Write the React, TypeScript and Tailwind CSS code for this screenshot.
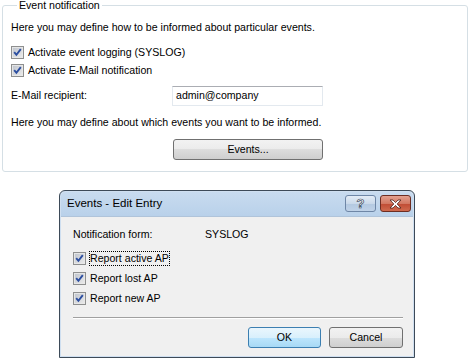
const font = { fontFamily: '"Liberation Sans", Arial, sans-serif' };

function Check({ focus, label }: { focus?: boolean; label: string }) {
  return (
    <label className="flex h-[13px] items-center gap-[4px]">
      <svg width="13" height="13" viewBox="0 0 13 13" className="shrink-0">
        <defs>
          <linearGradient id="cbg" x1="0" y1="0" x2="1" y2="1">
            <stop offset="0" stopColor="#bfc4cd" />
            <stop offset="1" stopColor="#ebebeb" />
          </linearGradient>
        </defs>
        <rect x="0.5" y="0.5" width="12" height="12" fill="#f4f4f4" stroke="#8e8f8f" />
        <rect x="1.5" y="1.5" width="10" height="10" fill="url(#cbg)" stroke="#e6e6e6" strokeWidth="0.8" />
        <path d="M3.2 6.2 L5.4 8.8 L9.8 3.2" fill="none" stroke="#2c4ea0" strokeWidth="1.9" />
      </svg>
      <span className={focus ? 'outline outline-1 outline-dotted outline-black leading-[13px]' : 'leading-[13px]'}>{label}</span>
    </label>
  );
}

function Btn({ children, w, focus }: { children: React.ReactNode; w: string; focus?: boolean }) {
  return (
    <button
      className={`${w} h-[21px] rounded-[3px] border text-[10.6px] leading-[19px] text-black ${
        focus
          ? 'border-[#3c7fb1] bg-[linear-gradient(#eaf6fd_0%,#d9f0fc_50%,#bee6fd_50%,#a7d9f5_100%)]'
          : 'border-[#707070] bg-[linear-gradient(#f2f2f2_0%,#ebebeb_50%,#dddddd_50%,#cfcfcf_100%)]'
      }`}
      style={font}
    >
      {children}
    </button>
  );
}

export default function App() {
  return (
    <div className="h-[359px] w-[470px] overflow-hidden bg-white text-[10.6px] text-black" style={font}>
      {/* Group box */}
      <fieldset className="ml-[2px] w-[466px] rounded-[3px] border border-[#d5dfe5] pb-[11px] pl-[8px]">
        <legend className="ml-[6px] px-[2px] leading-[11px]">Event notification</legend>
        <p className="mt-[10px] leading-[13px]">Here you may define how to be informed about particular events.</p>
        <div className="mt-[12px] flex flex-col gap-[5px]">
          <Check label="Activate event logging (SYSLOG)" />
          <Check label="Activate E-Mail notification" />
        </div>
        <div className="mt-[9px] flex h-[20px] items-center">
          <span className="w-[161px]">E-Mail recipient:</span>
          <div className="flex h-[20px] w-[151px] items-center border border-[#e3e9ef] border-t-[#abadb3] px-[3px]">
            admin@company
          </div>
        </div>
        <p className="mt-[10px] leading-[13px]">Here you may define about which events you want to be informed.</p>
        <div className="mt-[10px] pl-[162px]">
          <Btn w="w-[150px]">Events...</Btn>
        </div>
      </fieldset>

      {/* Dialog */}
      <div className="ml-[59px] mt-[18px] flex h-[168px] w-[356px] flex-col rounded-t-[6px] border border-[#3d4a58] bg-[#cfdff0] p-px">
        <div className="flex h-[24px] shrink-0 items-center justify-between rounded-t-[5px] bg-[linear-gradient(#c8dbef,#b9d1ea)] pl-[6px] pr-[2px]">
          <span className="text-[11.5px]">Events - Edit Entry</span>
          <div className="flex gap-[4px] self-start pt-[3px]">
            <div className="flex h-[17px] w-[31px] items-center justify-center rounded-[3px] border border-[#6e86a6] bg-[linear-gradient(#e3ecf6_0%,#cad9ea_50%,#b3c8e0_50%,#bfd2e8_100%)]">
              <span
                className="text-[13px] font-bold leading-none text-white"
                style={{ WebkitTextStroke: '0.7px #3a4a5e' }}
              >
                ?
              </span>
            </div>
            <div className="flex h-[17px] w-[31px] items-center justify-center rounded-[3px] border border-[#6d2d22] bg-[linear-gradient(#e3a08f_0%,#d27862_50%,#bf4a33_50%,#cf6a4e_100%)]">
              <svg width="13" height="10" viewBox="0 0 13 10">
                <path
                  d="M1 1 H4 L6.5 3.6 L9 1 H12 L8.2 5 L12 9 H9 L6.5 6.4 L4 9 H1 L4.8 5 Z"
                  fill="#fff"
                  stroke="#4a1f18"
                  strokeWidth="0.8"
                />
              </svg>
            </div>
          </div>
        </div>
        <div className="flex flex-1 flex-col border-t border-[#b0c4da] bg-[#f0f0f0] pl-[12px] pr-[10px] pt-[11px]">
          <div className="flex leading-[13px]">
            <span className="w-[132px]">Notification form:</span>
            <span>SYSLOG</span>
          </div>
          <div className="mt-[11px] flex flex-col gap-[7px]">
            <Check focus label="Report active AP" />
            <Check label="Report lost AP" />
            <Check label="Report new AP" />
          </div>
          <div className="mt-[12px] h-[2px] border-t border-b border-t-[#a0a0a0] border-b-white" />
          <div className="mt-[8px] flex justify-end gap-[8px]">
            <Btn w="w-[73px]" focus>
              OK
            </Btn>
            <Btn w="w-[74px]">Cancel</Btn>
          </div>
        </div>
      </div>
    </div>
  );
}
